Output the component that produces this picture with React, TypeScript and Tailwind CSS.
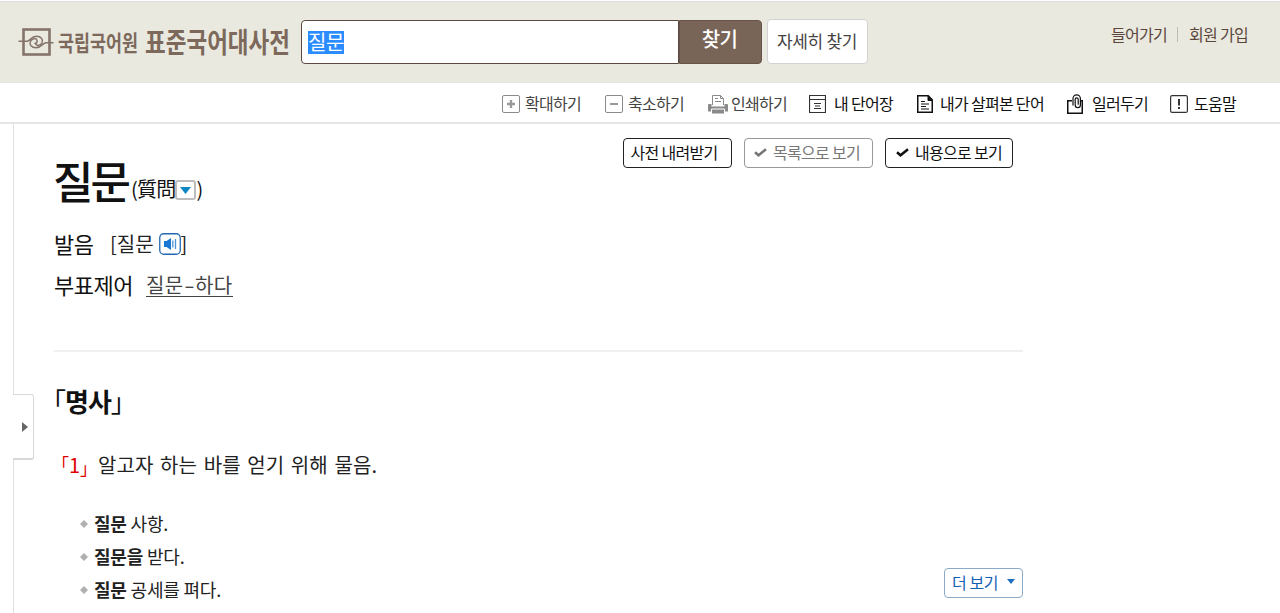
import React from "react";
import clsx from "clsx";

interface Example {
  keyword: string;
  particle?: string;
  rest: string;
}

const examples: Example[] = [
  { keyword: "질문", rest: "사항." },
  { keyword: "질문", particle: "을", rest: "받다." },
  { keyword: "질문", rest: "공세를 펴다." },
];

function Logo() {
  return (
    <svg width="272" height="36" viewBox="0 -2 272 36" className="shrink-0 overflow-visible" fill="#7d695c">
      <g fill="none" stroke="#85746a">
        <rect x="5.500" y="3.500" width="26" height="25" strokeWidth="2.600" />
        <path d="M0.500 15.300H9c3 0 4-5 9.500-5 4.500 0 7 3 5.500 6.500-1.500 3-5.500 3.500-6.500 1" strokeWidth="1.500" />
        <path d="M35.500 16.700H28c-3 0-4.500 5-10 5-4.500 0-7-3-5.500-6.500 1.500-3 5.500-3.500 6.500-1 0.800 2-1 3.500-2.500 3" strokeWidth="1.500" />
      </g>
      <text x="40" y="24.500" textLength="80" lengthAdjust="spacingAndGlyphs" className="text-[22px] font-bold">
        국립국어원
      </text>
      <text x="127" y="26.500" textLength="145" lengthAdjust="spacingAndGlyphs" className="text-[28px] font-bold">
        표준국어대사전
      </text>
    </svg>
  );
}

function PlusIcon() {
  return (
    <svg width="18" height="18" viewBox="0 0 18 18" fill="none">
      <rect x="0.500" y="0.500" width="17" height="17" rx="1.500" stroke="#8a8a8a" />
      <path d="M9 5v8M5 9h8" stroke="#9a9a9a" strokeWidth="2.400" />
    </svg>
  );
}

function MinusIcon() {
  return (
    <svg width="18" height="18" viewBox="0 0 18 18" fill="none">
      <rect x="0.500" y="0.500" width="17" height="17" rx="1.500" stroke="#8a8a8a" />
      <path d="M5 9h8" stroke="#9a9a9a" strokeWidth="2" />
    </svg>
  );
}

function PrinterIcon() {
  return (
    <svg width="20" height="19" viewBox="0 0 20 19" fill="none">
      <path d="M4.500 10V0.500h8l3 3V10" stroke="#8a8a8a" />
      <path d="M12.500 0.500v3h3M7 3.500h3M7 6.500h6" stroke="#8a8a8a" />
      <path d="M1 9h2.500v2.500h13V9H19a1 1 0 0 1 1 1v6.500H0V10a1 1 0 0 1 1-1z" fill="#8a8a8a" />
      <path d="M3.500 14h13v4.500h-13z" fill="#8a8a8a" stroke="#fff" />
      <path d="M4 17.800h12" stroke="#8a8a8a" strokeWidth="1.400" />
    </svg>
  );
}

function WordbookIcon() {
  return (
    <svg width="17" height="18" viewBox="0 0 17 18" fill="none" stroke="#333">
      <path d="M0.500 0.500h16v17H0.500zM0.500 4.500h16M5 8.500h7M6 11h5M5 13.500h7" strokeWidth="1.200" />
    </svg>
  );
}

function DocumentIcon() {
  return (
    <svg width="16" height="18" viewBox="0 0 16 18" fill="none" stroke="#111">
      <path d="M0.750 0.750h10.500l4 4v12.500H0.750z" strokeWidth="1.500" />
      <path d="M11 1v4.500h4z" fill="#111" />
      <path d="M4 6.500h4M4 9h8M4 11.500h5M4 14h8" strokeWidth="1.200" />
    </svg>
  );
}

function ClipIcon() {
  return (
    <svg width="16" height="20" viewBox="0 0 16 20" fill="none" stroke="#111">
      <path d="M5 6.750H0.750v12.500h14.500V6.750H14" strokeWidth="1.500" />
      <path d="M6 11.500V4.500a3.700 3.700 0 0 1 7.400 0V11a2.600 2.600 0 0 1-5.200 0V5.300a1.500 1.500 0 0 1 3 0v5.500" strokeWidth="1.200" />
    </svg>
  );
}

function HelpIcon() {
  return (
    <svg width="18" height="18" viewBox="0 0 18 18" fill="none" stroke="#333">
      <rect x="0.600" y="0.600" width="16.800" height="16.800" rx="1.500" strokeWidth="1.200" />
      <path d="M9 4v6.500M9 12v2" strokeWidth="2" />
    </svg>
  );
}

function CheckIcon() {
  return (
    <svg width="13" height="9" viewBox="0 0 13 9" fill="none" stroke="currentColor" strokeWidth="2.600">
      <path d="M1 4.200l3.500 3L12 1.200" />
    </svg>
  );
}

function SpeakerIcon() {
  return (
    <svg width="22" height="22" viewBox="0 0 22 22" fill="none">
      <rect x="0.750" y="0.750" width="20.500" height="20.500" rx="4" fill="#fff" stroke="#2268b2" strokeWidth="1.300" />
      <path d="M5 8h2.500L12 5v12l-4.500-3H5z" fill="#1976d2" />
      <path d="M13.800 7.500v7M16.500 6v10" stroke="#4c91d6" strokeWidth="1.300" />
    </svg>
  );
}

interface ToolItemProps {
  icon: React.ReactNode;
  label: string;
  className: string;
}

function ToolItem({ icon, label, className }: ToolItemProps) {
  return (
    <button className={clsx("flex items-center whitespace-nowrap", className)}>
      {icon}
      <span className="pb-[2px]">{label}</span>
    </button>
  );
}

export default function App() {
  return (
    <div className="flex h-[613px] w-[1280px] flex-col overflow-hidden bg-white font-['Noto_Sans_CJK_KR',sans-serif] text-[#111]">
      {/* Header */}
      <header className="mt-px flex h-[82px] shrink-0 items-start border-t border-b border-t-[#dcdcdc] border-b-[#e4e4e4] bg-[#e9e9df] pl-[18px]">
        <div className="mt-[22px]">
          <Logo />
        </div>
        <div className="mt-[18px] ml-[11px] flex h-[44px] w-[461px]">
          <div className="flex w-[378px] items-start rounded-l-[4px] border border-[#5c4a42] bg-white pt-[10px] pl-[6px]">
            <span className="h-[23px] w-[36px] bg-[#2b8cff] text-[20px] leading-[21px] tracking-[-0.5px] text-white">질문</span>
          </div>
          <button className="flex-1 rounded-r-[4px] border border-[#66544a] bg-[#796458] pr-[2px] pb-[6px] text-[20px] leading-none font-medium tracking-[-0.6px] text-white">
            찾기
          </button>
        </div>
        <button className="mt-[17px] ml-[5px] h-[45px] w-[101px] rounded-[4px] border border-[#d2d2d2] bg-white pr-px pb-[3px] text-[17px] leading-none tracking-[-0.3px] text-[#444]">
          자세히 찾기
        </button>
        <nav className="mt-[23px] ml-auto flex items-center pr-[32px] text-[16px] leading-[18px] tracking-[-0.7px] text-[#5c463c]">
          <a>들어가기</a>
          <span className="mr-[11px] ml-[10px] h-[15px] w-px bg-[#bdbdb5]" />
          <a>회원 가입</a>
        </nav>
      </header>

      {/* Toolbar */}
      <div className="flex h-[41px] shrink-0 items-center border-b-2 border-[#e5e5e5] pt-[3px] pl-[502px] text-[16px] leading-[18px] tracking-[-0.7px]">
        <ToolItem icon={<PlusIcon />} label="확대하기" className="w-[103px] gap-[5px] text-[#444]" />
        <ToolItem icon={<MinusIcon />} label="축소하기" className="w-[103px] gap-[5px] text-[#444]" />
        <ToolItem icon={<PrinterIcon />} label="인쇄하기" className="w-[101px] gap-[3px] text-[#444]" />
        <ToolItem icon={<WordbookIcon />} label="내 단어장" className="w-[108px] gap-[8px]" />
        <ToolItem icon={<DocumentIcon />} label="내가 살펴본 단어" className="w-[150px] gap-[7px]" />
        <ToolItem icon={<ClipIcon />} label="일러두기" className="w-[103px] gap-[9px]" />
        <ToolItem icon={<HelpIcon />} label="도움말" className="gap-[6px]" />
      </div>

      {/* Entry */}
      <div className="flex flex-1">
        <aside className="flex w-[34px] shrink-0 pl-[13px]">
          <div className="flex w-[21px] flex-col">
            <div className="h-[270px] border-l border-[#e2e2e2]" />
            <button className="flex h-[66px] items-center justify-center rounded-r-[3px] border border-b-2 border-l-0 border-[#d8d8d8] pl-[3px]">
              <svg width="6" height="10" viewBox="0 0 6 10" fill="#666">
                <path d="M0 0l6 5-6 5z" />
              </svg>
            </button>
            <div className="flex-1 border-l border-[#e2e2e2]" />
          </div>
        </aside>

        <main className="ml-5 flex w-[969px] flex-col">
          <div className="mt-[14px] mr-[10px] flex h-[30px] justify-end gap-[12px] text-[16px] leading-none tracking-[-0.7px]">
            <button className="w-[109px] rounded-[4px] border border-[#222] pr-[7px] pb-[2px]">사전 내려받기</button>
            <button className="flex w-[129px] items-center justify-center gap-[6px] rounded-[4px] border border-[#999] pr-[3px] pb-[2px] text-[#777]">
              <CheckIcon />
              목록으로 보기
            </button>
            <button className="flex w-[128px] items-center justify-center gap-[6px] rounded-[4px] border border-[#222] pb-[2px]">
              <CheckIcon />
              내용으로 보기
            </button>
          </div>

          <h1 className="-mt-[13px] -ml-px flex h-[50px] items-end leading-none">
            <span className="w-[78px] text-[44px] leading-[50px] font-medium tracking-[-3px]">질문</span>
            <span className="mb-[3px] flex items-center text-[20px] leading-[26px] tracking-[-0.8px]">
              (質問
              <span className="mt-[2px] flex h-[20px] w-[21px] items-center justify-center rounded-[3px] border-2 border-[#bdbdbd]">
                <svg width="11" height="7" viewBox="0 0 11 7" fill="#0f86c4">
                  <path d="M0 0h11L5.500 7z" />
                </svg>
              </span>
              )
            </span>
          </h1>

          <div className="mt-[22px] flex h-[34px] items-center text-[22px] leading-none tracking-[-0.4px]">
            <span className="w-[56px] pb-[3px]">발음</span>
            <span className="flex items-center text-[20px] tracking-[0px] text-[#222]">
              <span className="pb-px">[질문</span>
              <span className="ml-[5px]">
                <SpeakerIcon />
              </span>
              <span className="pb-px">]</span>
            </span>
          </div>
          <div className="mt-[7px] flex h-[34px] items-center text-[22px] leading-none tracking-[-0.5px]">
            <span className="w-[92px] pb-[2px]">부표제어</span>
            <a className="border-b border-[#444] text-[20px] leading-[22px] tracking-[0.4px] text-[#444]">
              질문<span className="mx-[2px] inline-block scale-x-150">-</span>하다
            </a>
          </div>

          <hr className="mt-[48px] border-t-2 border-[#f0f0f0]" />

          <h2 className="mt-[31px] flex h-[36px] items-center text-[26px] leading-none font-bold tracking-[-1px]">
            <span className="-ml-[14px] font-normal">「</span>
            명사
            <span className="font-normal">」</span>
          </h2>
          <p className="mt-[32px] flex h-[28px] items-center text-[20px] leading-none text-[#222]">
            <span className="mr-[7px] -ml-[2px] flex w-[39px] text-[#de0000]">
              <span className="w-[17px] text-[17px]">「</span>
              <span>1</span>
              <span className="w-[10px] pt-[4px] text-[17px]">」</span>
            </span>
            <span className="tracking-[0.1px] [word-spacing:2px]">알고자 하는 바를 얻기 위해 물음.</span>
          </p>

          <div className="mt-[28px] flex items-start justify-between pl-[26px]">
            <ul>
              {examples.map((example, i) => (
                <li key={i} className="flex h-[33px] items-center text-[18px] leading-none tracking-[-0.2px] text-[#222]">
                  <svg width="8" height="8" viewBox="0 0 8 8" fill="#b0b0b0" className="mr-[6px]">
                    <path d="M4 0l2 2 2 2-2 2-2 2-2-2-2-2 2-2z" />
                  </svg>
                  <span className="pb-px">
                    <b>
                      {example.keyword}
                      {example.particle}
                    </b>{" "}
                    {example.rest}
                  </span>
                </li>
              ))}
            </ul>
            <button className="mt-[61px] flex h-[30px] w-[79px] items-center rounded-[4px] border border-[#8ba9c8] pb-[3px] pl-[7px] text-[16px] leading-none tracking-[-0.4px] text-[#1360b5]">
              더 보기
              <svg width="8" height="5" viewBox="0 0 8 5" fill="#1f6fc0" className="ml-[9px]">
                <path d="M0 0h8L4 5z" />
              </svg>
            </button>
          </div>
        </main>
      </div>
    </div>
  );
}
